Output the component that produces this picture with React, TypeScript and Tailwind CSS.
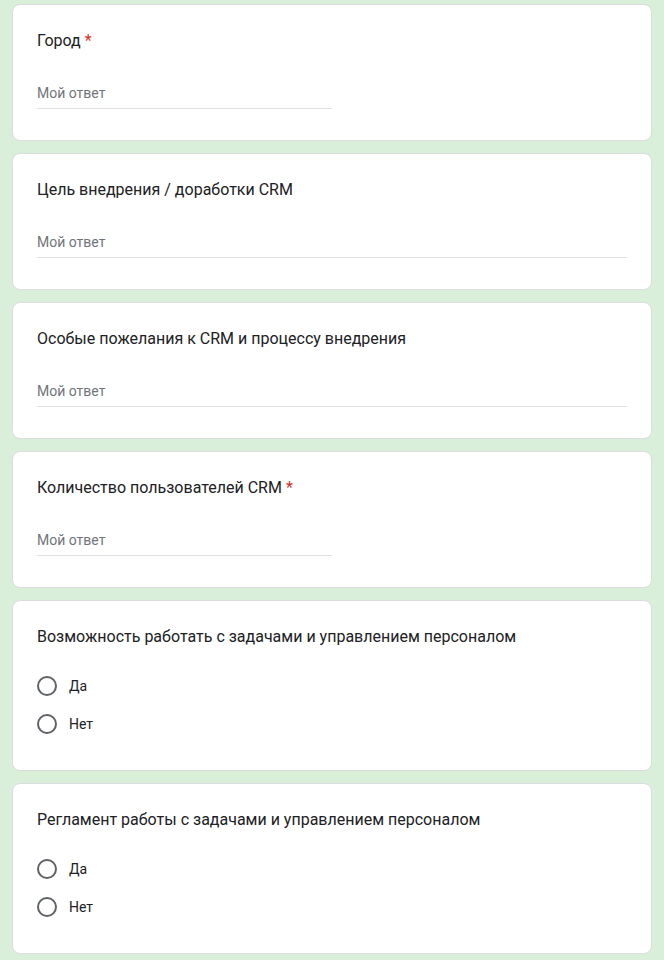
const sans = "font-['Roboto','Noto_Sans',sans-serif]";

function Card({ children }: { children: React.ReactNode }) {
  return (
    <div className="bg-white border border-[#dadce0] rounded-lg px-6 pt-6">{children}</div>
  );
}

function Title({ text, required }: { text: string; required?: boolean }) {
  return (
    <div className="text-[16px] leading-6 text-[#202124]">
      {text}
      {required && <span className="text-[#d93025]"> *</span>}
    </div>
  );
}

function TextQuestion({ title, required, wide }: { title: string; required?: boolean; wide?: boolean }) {
  return (
    <Card>
      <Title text={title} required={required} />
      <div className="pb-[31px]">
        <div
          className={`mt-[23px] h-[33px] border-b border-[#e0e0e0] flex items-end pb-[5px] ${wide ? 'w-full' : 'w-1/2'}`}
        >
          <span className="text-[14px] leading-5 text-[#70757a]">Мой ответ</span>
        </div>
      </div>
    </Card>
  );
}

function Radio({ label }: { label: string }) {
  return (
    <div className="flex items-center h-[38px]">
      <span className="w-5 h-5 rounded-full border-2 border-[#5f6368] mr-[12px]" />
      <span className="text-[14px] text-[#202124]">{label}</span>
    </div>
  );
}

function ChoiceQuestion({ title }: { title: string }) {
  return (
    <Card>
      <Title text={title} />
      <div className="mt-[18px] pb-[27px]">
        <Radio label="Да" />
        <Radio label="Нет" />
      </div>
    </Card>
  );
}

export default function App() {
  return (
    <div className={`min-h-[960px] bg-[#d9efd9] px-3 pt-1 pb-3 flex flex-col gap-3 ${sans}`}>
      <TextQuestion title="Город" required />
      <TextQuestion title="Цель внедрения / доработки CRM" wide />
      <TextQuestion title="Особые пожелания к CRM и процессу внедрения" wide />
      <TextQuestion title="Количество пользователей CRM" required />
      <ChoiceQuestion title="Возможность работать с задачами и управлением персоналом" />
      <ChoiceQuestion title="Регламент работы с задачами и управлением персоналом" />
    </div>
  );
}
